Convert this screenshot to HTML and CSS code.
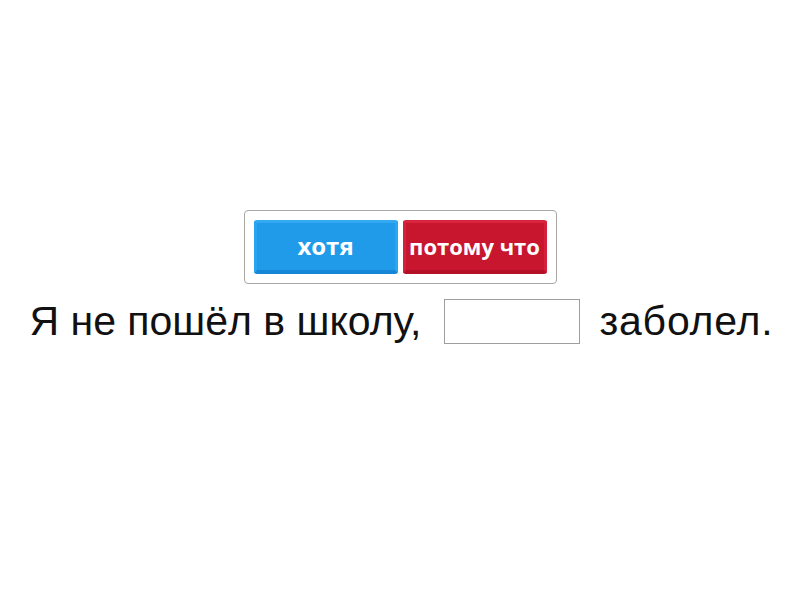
FILE: index.html
```html
<!DOCTYPE html>
<html lang="ru">
<head>
<meta charset="utf-8">
<link rel="stylesheet" href="styles.css">
</head>
<body>
<main class="page">
  <div class="bank">
    <div class="chip chip-blue">хотя</div>
    <div class="chip chip-red chip-long">потому что</div>
  </div>
  <div class="sentence">
    <span class="part">Я не пошёл в школу,</span>
    <span class="slot"></span>
    <span class="part part-end">заболел.</span>
  </div>
</main>
</body>
</html>
```
FILE: styles.css
```css
html, body {
  margin: 0;
  padding: 0;
  background: #ffffff;
}
.page {
  width: 800px;
  height: 600px;
  display: flex;
  flex-direction: column;
  align-items: center;
  padding-top: 210px;
  box-sizing: border-box;
}
.bank {
  display: flex;
  gap: 5px;
  padding: 9px;
  border: 1px solid #aaa7a4;
  border-radius: 4px;
}
.chip {
  width: 144px;
  height: 54px;
  box-sizing: border-box;
  border-radius: 3px;
  display: flex;
  align-items: center;
  justify-content: center;
  color: #ffffff;
  font-family: "Open Sans", "Liberation Sans", sans-serif;
  font-weight: 700;
  font-size: 24px;
  border: 3px solid;
  border-bottom-width: 4px;
  white-space: nowrap;
  padding-bottom: 2px;
}
.chip-long {
  font-size: 22px;
}
.chip-blue {
  background: #1f9bea;
  border-color: #31aaf2 #2aa5f0 #1686d6 #2aa5f0;
}
.chip-red {
  background: #c8162e;
  border-color: #d8243c #d52039 #b30f26 #d52039;
}
.sentence {
  display: flex;
  align-items: center;
  margin-top: 14px;
  margin-left: 3px;
  font-family: "Liberation Sans", Arial, sans-serif;
  font-size: 41px;
  line-height: 47px;
  color: #111111;
}
.part-end {
  letter-spacing: 0.8px;
}
.slot {
  width: 136px;
  height: 45px;
  box-sizing: border-box;
  border: 1px solid #9e9e9e;
  margin: 0 19px 0 23px;
}
```
